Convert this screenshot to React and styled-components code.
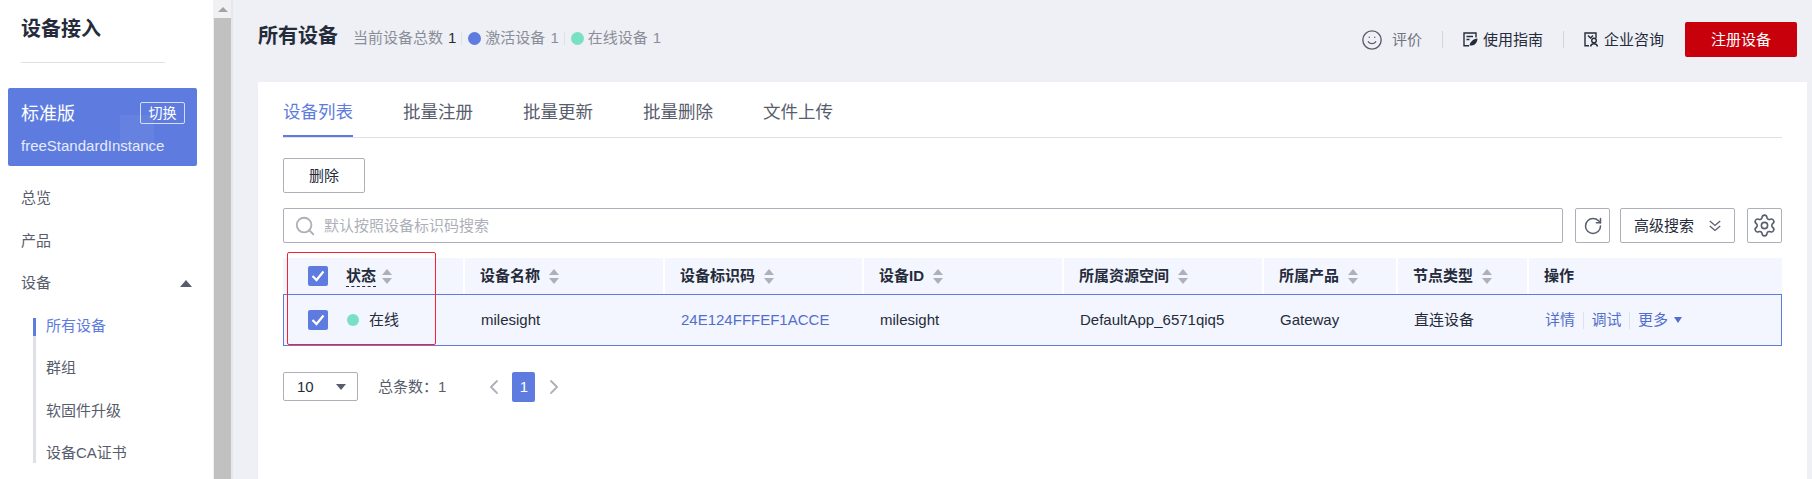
import React from 'react';
import styled, { createGlobalStyle } from 'styled-components';
import { Smile, Search, RotateCw, Settings, ChevronLeft, ChevronRight } from 'lucide-react';

const GlobalStyle = createGlobalStyle`
  html, body {
    margin: 0;
    padding: 0;
    background: #eef0f5;
  }
  * {
    box-sizing: border-box;
  }
  body {
    font-family: "Liberation Sans", "Noto Sans CJK SC", sans-serif;
    font-size: 15px;
    line-height: 1.2;
    color: #252b3a;
  }
`;

const Page = styled.div`
  display: flex;
  width: 1812px;
  height: 479px;
  overflow: hidden;
`;

const Sidebar = styled.aside`
  width: 213px;
  flex: none;
  background: #fff;
`;

const SideTitle = styled.h1`
  margin: 0 48px 0 21px;
  height: 63px;
  padding-bottom: 5px;
  display: flex;
  align-items: center;
  font-size: 20px;
  font-weight: 700;
  color: #252b3a;
  border-bottom: 1px solid #dfe1e6;
`;

const Edition = styled.div`
  position: relative;
  margin: 25px 16px 0 8px;
  height: 78px;
  padding: 14px 12px 0 13px;
  background: #5e7ce0;
  border-radius: 2px;
  color: #fff;
  overflow: hidden;
  &::after {
    content: '';
    position: absolute;
    left: 112px;
    top: 27px;
    width: 34px;
    height: 34px;
    background: rgba(255, 255, 255, 0.05);
  }
`;

const EditionTop = styled.div`
  display: flex;
  justify-content: space-between;
  align-items: center;
  height: 22px;
`;

const EditionName = styled.span`
  margin-top: 3px;
  font-size: 18px;
`;

const SwitchBadge = styled.span`
  width: 45px;
  height: 22px;
  display: flex;
  align-items: center;
  justify-content: center;
  font-size: 14px;
  border: 1px solid rgba(255, 255, 255, 0.75);
  border-radius: 2px;
`;

const EditionId = styled.div`
  margin-top: 12px;
  font-size: 15px;
  line-height: 20px;
  opacity: 0.85;
`;

const Nav = styled.nav`
  margin-top: 11px;
`;

const NavItem = styled.div`
  height: 42.5px;
  padding: 0 21px;
  display: flex;
  align-items: center;
  justify-content: space-between;
  color: #575d6c;
`;

const Caret = styled.i`
  width: 0;
  height: 0;
  border-left: 6px solid transparent;
  border-right: 6px solid transparent;
  border-bottom: 7px solid #575d6c;
`;

const SubNav = styled.div`
  display: flex;
  flex-direction: column;
  margin: 13.5px 0 0 33px;
  height: 145px;
  border-left: 3px solid #dfe1e6;
`;

const SubList = styled.div`
  margin-top: -13.5px;
`;

const SubItem = styled.div`
  position: relative;
  height: 42.5px;
  padding-left: 10px;
  display: flex;
  align-items: center;
  color: ${(p) => (p.$active ? '#5e7ce0' : '#575d6c')};
  ${(p) =>
    p.$active &&
    `&::before {
      content: '';
      position: absolute;
      left: -3px;
      top: 13.5px;
      width: 3px;
      height: 18px;
      background: #5e7ce0;
    }`}
`;

const Scrollbar = styled.div`
  width: 20px;
  flex: none;
  display: flex;
  flex-direction: column;
  background: #f1f1f3;
  border-left: 1px solid #f1f1f1;
  border-right: 2px solid #e6e8ef;
`;

const ScrollUp = styled.div`
  height: 18px;
  display: flex;
  align-items: center;
  justify-content: center;
  &::before {
    content: '';
    border-left: 5px solid transparent;
    border-right: 5px solid transparent;
    border-bottom: 5px solid #a3a3a3;
  }
`;

const ScrollThumb = styled.div`
  flex: 1;
  background: #c1c1c1;
`;

const Main = styled.main`
  flex: 1;
  min-width: 0;
  display: flex;
  flex-direction: column;
  padding: 0 5px 0 25px;
`;

const Header = styled.header`
  height: 82px;
  flex: none;
  padding-right: 10px;
  display: flex;
  align-items: center;
  justify-content: space-between;
`;

const HeadLeft = styled.div`
  margin-bottom: 6px;
  display: flex;
  align-items: center;
`;

const PageTitle = styled.h2`
  margin: 0 15px 5px 0;
  font-size: 20px;
  font-weight: 700;
  color: #252b3a;
`;

const Stat = styled.span`
  display: flex;
  align-items: center;
  color: #8a8e99;
`;

const StatNum = styled.span`
  margin-left: 5px;
  color: ${(p) => p.$color || '#8a8e99'};
`;

const StatSep = styled.i`
  width: 1px;
  height: 13px;
  margin: 0 6px 0 5px;
  background: #dfe1e6;
`;

const Dot = styled.i`
  width: ${(p) => p.$size || 13}px;
  height: ${(p) => p.$size || 13}px;
  margin-right: ${(p) => p.$gap || 4}px;
  flex: none;
  border-radius: 50%;
  background: ${(p) => p.$color};
`;

const HeadRight = styled.div`
  margin-bottom: 3px;
  display: flex;
  align-items: center;
`;

const HeadLink = styled.span`
  display: flex;
  align-items: center;
  gap: ${(p) => p.$gap || 5}px;
  color: ${(p) => (p.$muted ? '#6f7480' : '#252b3a')};
`;

const HeadSep = styled.i`
  width: 1px;
  height: 17px;
  margin: 0 20px;
  background: #d4d6dc;
`;

const RegisterButton = styled.button`
  width: 112px;
  height: 35px;
  margin-left: 21px;
  border: 0;
  border-radius: 2px;
  background: #c7000b;
  color: #fff;
  font: inherit;
`;

const Card = styled.section`
  flex: 1;
  padding: 0 25px;
  background: #fff;
`;

const Tabs = styled.div`
  height: 56px;
  display: flex;
  gap: 50px;
  border-bottom: 1px solid #dfe1e6;
`;

const Tab = styled.div`
  width: 70px;
  height: 55px;
  display: flex;
  align-items: center;
  justify-content: center;
  white-space: nowrap;
  font-size: 17.5px;
  padding-top: 8px;
  color: ${(p) => (p.$active ? '#5e7ce0' : '#575d6c')};
  border-bottom: 2px solid ${(p) => (p.$active ? '#5e7ce0' : 'transparent')};
`;

const OutlineButton = styled.button`
  width: ${(p) => p.$width}px;
  height: 35px;
  margin: ${(p) => p.$margin || 0};
  display: flex;
  flex: none;
  align-items: center;
  justify-content: center;
  gap: ${(p) => p.$gap || 0}px;
  padding: 0;
  background: #fff;
  border: 1px solid #adb0b8;
  border-radius: 2px;
  color: #252b3a;
  font: inherit;
`;

const DeleteRow = styled.div`
  margin-top: 20px;
`;

const SearchRow = styled.div`
  margin-top: 15px;
  display: flex;
  align-items: center;
`;

const SearchBox = styled.div`
  flex: 1;
  height: 35px;
  margin-right: 12px;
  padding-left: 10px;
  display: flex;
  align-items: center;
  gap: 8px;
  border: 1px solid #adb0b8;
  border-radius: 2px;
  color: #adb0b8;
`;

const TableWrap = styled.div`
  position: relative;
  margin-top: 15px;
`;

const HeadRow = styled.div`
  display: grid;
  grid-template-columns: 180px 200px 199px 200px 200px 134px 131px 255px;
  height: 36px;
  background: #f3f6fe;
`;

const BodyRow = styled.div`
  display: grid;
  grid-template-columns: 180px 200px 199px 200px 200px 134px 131px 255px;
  height: 52px;
  background: #f3f6fe;
  border: 1px solid #5e7ce0;
  overflow: hidden;
`;

const HeadCell = styled.div`
  display: flex;
  align-items: center;
  gap: 9px;
  padding-left: 15px;
  font-weight: 700;
  font-size: 15px;
  color: #252b3a;
  border-left: 2px solid #fff;
  &:first-child {
    gap: 6px;
    padding-left: 25px;
    border-left: 0;
  }
`;

const BodyCell = styled.div`
  display: flex;
  align-items: center;
  padding-left: 17px;
  font-size: 15px;
  color: ${(p) => p.$color || '#252b3a'};
  &:first-child {
    padding-left: 24px;
  }
`;

const Check = styled.span`
  width: 20px;
  height: 20px;
  margin-right: ${(p) => p.$gap}px;
  display: flex;
  flex: none;
  align-items: center;
  justify-content: center;
  border-radius: 2px;
  background: #5e7ce0;
`;

const StatusHead = styled.span`
  margin-top: -1px;
  line-height: 21px;
  border-bottom: 1px dashed #252b3a;
`;

const Actions = styled.span`
  display: flex;
  align-items: center;
  color: #526ecc;
`;

const ActionSep = styled.i`
  width: 1px;
  height: 17px;
  margin: 0 8px 0 7.5px;
  background: #dfe1e6;
`;

const MoreCaret = styled.i`
  margin-left: 6px;
  border-left: 4px solid transparent;
  border-right: 4px solid transparent;
  border-top: 6px solid #526ecc;
`;

const Annotation = styled.div`
  position: absolute;
  left: 4px;
  top: -6px;
  width: 149px;
  height: 93px;
  border: 1.5px solid #f5222d;
  border-radius: 2px;
  pointer-events: none;
`;

const Pagination = styled.div`
  margin-top: 26px;
  display: flex;
  align-items: center;
  height: 30px;
`;

const PageSize = styled.div`
  width: 75px;
  height: 29px;
  align-self: flex-start;
  padding: 0 11px 0 13px;
  display: flex;
  align-items: center;
  justify-content: space-between;
  border: 1px solid #adb0b8;
  border-radius: 2px;
`;

const SizeCaret = styled.i`
  border-left: 5px solid transparent;
  border-right: 5px solid transparent;
  border-top: 6px solid #575d6c;
`;

const Total = styled.span`
  margin: 0 36px 0 20px;
  color: #575d6c;
`;

const PageNum = styled.span`
  width: 23px;
  height: 30px;
  margin: 0 7px 0 6px;
  display: flex;
  align-items: center;
  justify-content: center;
  border-radius: 2px;
  background: #5e7ce0;
  color: #fff;
`;

const SortIcon = () => (
  <svg width="10" height="15" viewBox="0 0 10 15" fill="#adb0b8">
    <path d="M5 0l5 6H0z" />
    <path d="M5 15L0 9h10z" />
  </svg>
);

const TickIcon = () => (
  <svg width="14" height="12" viewBox="0 0 14 12" fill="none" stroke="#fff" strokeWidth="2.2">
    <path d="M1.5 6l4 4 7-8.500" />
  </svg>
);

const GuideIcon = () => (
  <svg width="15" height="15" viewBox="0 0 15 15" fill="none" stroke="#252b3a" strokeWidth="1.4">
    <path d="M6 13.800H1V1h12v4.500" />
    <path d="M3.500 4.500h6.500M3.500 7.500h3" />
    <path d="M6.500 13.500c.3-3.500 3.500-6.500 8-7-.3 4-2.500 7-6 7z" fill="#252b3a" stroke="none" />
  </svg>
);

const ConsultIcon = () => (
  <svg width="15" height="15" viewBox="0 0 15 15" fill="none" stroke="#252b3a" strokeWidth="1.4">
    <path d="M5 13.800H1V1h11v5" />
    <path d="M4 3.500l2.500 2.500 2.500-2.500" />
    <circle cx="10" cy="8.500" r="2.300" />
    <path d="M6.500 14.500c.5-2 2-2.800 3.500-2.800s3 .8 3.500 2.800" />
  </svg>
);

const DoubleDownIcon = () => (
  <svg width="12" height="12" viewBox="0 0 12 12" fill="none" stroke="#575d6c" strokeWidth="1.3">
    <path d="M.8 1l5.200 4.500L11.200 1" />
    <path d="M.8 6l5.200 4.500L11.200 6" />
  </svg>
);

const columns = [
  '设备名称',
  '设备标识码',
  '设备ID',
  '所属资源空间',
  '所属产品',
  '节点类型',
];

const tabs = ['设备列表', '批量注册', '批量更新', '批量删除', '文件上传'];

export default function App() {
  return (
    <Page>
      <GlobalStyle />
      <Sidebar>
        <SideTitle>设备接入</SideTitle>
        <Edition>
          <EditionTop>
            <EditionName>标准版</EditionName>
            <SwitchBadge>切换</SwitchBadge>
          </EditionTop>
          <EditionId>freeStandardInstance</EditionId>
        </Edition>
        <Nav>
          <NavItem>总览</NavItem>
          <NavItem>产品</NavItem>
          <NavItem>
            设备
            <Caret />
          </NavItem>
          <SubNav>
            <SubList>
              <SubItem $active>所有设备</SubItem>
              <SubItem>群组</SubItem>
              <SubItem>软固件升级</SubItem>
              <SubItem>设备CA证书</SubItem>
            </SubList>
          </SubNav>
        </Nav>
      </Sidebar>
      <Scrollbar>
        <ScrollUp />
        <ScrollThumb />
      </Scrollbar>
      <Main>
        <Header>
          <HeadLeft>
            <PageTitle>所有设备</PageTitle>
            <Stat>
              当前设备总数<StatNum $color="#252b3a">1</StatNum>
            </Stat>
            <StatSep />
            <Stat>
              <Dot $color="#5e7ce0" />
              激活设备<StatNum>1</StatNum>
            </Stat>
            <StatSep />
            <Stat>
              <Dot $color="#7ae0c3" />
              在线设备<StatNum>1</StatNum>
            </Stat>
          </HeadLeft>
          <HeadRight>
            <HeadLink $muted $gap={9}>
              <Smile size={22} color="#575d6c" strokeWidth={1.5} />
              评价
            </HeadLink>
            <HeadSep />
            <HeadLink>
              <GuideIcon />
              使用指南
            </HeadLink>
            <HeadSep />
            <HeadLink>
              <ConsultIcon />
              企业咨询
            </HeadLink>
            <RegisterButton>注册设备</RegisterButton>
          </HeadRight>
        </Header>
        <Card>
          <Tabs>
            {tabs.map((tab, i) => (
              <Tab key={tab} $active={i === 0}>
                {tab}
              </Tab>
            ))}
          </Tabs>
          <DeleteRow>
            <OutlineButton $width={82}>删除</OutlineButton>
          </DeleteRow>
          <SearchRow>
            <SearchBox>
              <Search size={22} color="#adb0b8" strokeWidth={2} />
              默认按照设备标识码搜索
            </SearchBox>
            <OutlineButton $width={35}>
              <RotateCw size={20} color="#575d6c" strokeWidth={1.8} />
            </OutlineButton>
            <OutlineButton $width={115} $gap={15} $margin="0 12px 0 10px">
              高级搜索
              <DoubleDownIcon />
            </OutlineButton>
            <OutlineButton $width={35}>
              <Settings size={25} color="#575d6c" strokeWidth={1.5} />
            </OutlineButton>
          </SearchRow>
          <TableWrap>
            <HeadRow>
              <HeadCell>
                <Check $gap={12}>
                  <TickIcon />
                </Check>
                <StatusHead>状态</StatusHead>
                <SortIcon />
              </HeadCell>
              {columns.map((col) => (
                <HeadCell key={col}>
                  {col}
                  <SortIcon />
                </HeadCell>
              ))}
              <HeadCell>操作</HeadCell>
            </HeadRow>
            <BodyRow>
              <BodyCell>
                <Check $gap={19}>
                  <TickIcon />
                </Check>
                <Dot $color="#7ae0c3" $size={12} $gap={10} />
                在线
              </BodyCell>
              <BodyCell>milesight</BodyCell>
              <BodyCell $color="#526ecc">24E124FFFEF1ACCE</BodyCell>
              <BodyCell>milesight</BodyCell>
              <BodyCell>DefaultApp_6571qiq5</BodyCell>
              <BodyCell>Gateway</BodyCell>
              <BodyCell>直连设备</BodyCell>
              <BodyCell>
                <Actions>
                  详情
                  <ActionSep />
                  调试
                  <ActionSep />
                  更多
                  <MoreCaret />
                </Actions>
              </BodyCell>
            </BodyRow>
            <Annotation />
          </TableWrap>
          <Pagination>
            <PageSize>
              10
              <SizeCaret />
            </PageSize>
            <Total>总条数：1</Total>
            <ChevronLeft size={24} color="#adb0b8" strokeWidth={1.8} />
            <PageNum>1</PageNum>
            <ChevronRight size={24} color="#adb0b8" strokeWidth={1.8} />
          </Pagination>
        </Card>
      </Main>
    </Page>
  );
}
